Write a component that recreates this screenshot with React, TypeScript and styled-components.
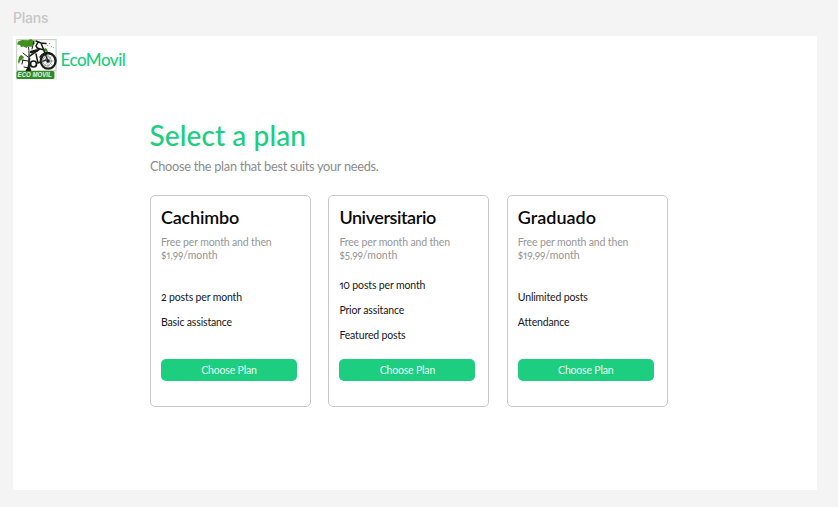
import React from 'react';
import styled, { createGlobalStyle } from 'styled-components';

const green = '#1dce80';

const GlobalStyle = createGlobalStyle`
  *, *::before, *::after { box-sizing: border-box; }
  body {
    margin: 0;
    background: #f4f4f4;
    font-family: Lato, sans-serif;
    font-feature-settings: "onum", "pnum";
    color: #161616;
  }
  h1, h2, p, ul { margin: 0; padding: 0; }
`;

const Canvas = styled.div`
  height: 507px;
  padding: 0 21px 17px 13px;
  display: flex;
  flex-direction: column;
  overflow: hidden;
`;

const FrameLabel = styled.div`
  height: 36px;
  flex: none;
  line-height: 35px;
  font-family: Inter, sans-serif;
  font-size: 14px;
  font-weight: 500;
  letter-spacing: -0.25px;
  color: #c6c6c6;
`;

const Page = styled.main`
  flex: 1;
  background: #fff;
`;

const Header = styled.header`
  display: flex;
  align-items: center;
  gap: 3.5px;
  padding: 3px 3px 0;
  height: 44px;
`;

const LogoImage = styled.svg`
  width: 41px;
  height: 41px;
  flex: none;
`;

const Brand = styled.span`
  font-size: 17px;
  font-weight: 500;
  letter-spacing: -0.5px;
  line-height: 20px;
  color: ${green};
`;

const Content = styled.section`
  padding: 37px 0 0 137px;
`;

const Title = styled.h1`
  margin-left: -0.5px;
  font-size: 28px;
  font-weight: 500;
  letter-spacing: 0.1px;
  line-height: 36px;
  color: ${green};
`;

const Subtitle = styled.p`
  margin-top: 4px;
  font-size: 12.8px;
  letter-spacing: -0.3px;
  line-height: 18px;
  color: #8c8c8c;
`;

const Plans = styled.div`
  display: grid;
  grid-template-columns: repeat(3, 161px);
  column-gap: 17.4px;
  margin-top: 20px;
`;

const Card = styled.article`
  height: 212px;
  padding: 11px 13px 25px 10px;
  border: 1px solid #c9c9c9;
  border-radius: 5px;
  display: flex;
  flex-direction: column;
`;

const PlanName = styled.h2<{ $tracking: number }>`
  font-size: 18px;
  font-weight: 600;
  letter-spacing: ${(p) => p.$tracking}px;
  line-height: 20px;
  color: #0a0a0a;
`;

const Price = styled.p`
  margin-top: 9px;
  font-size: 10.5px;
  letter-spacing: -0.15px;
  line-height: 12.5px;
  color: #969696;
`;

const Amount = styled.span`
  display: block;
  letter-spacing: 0;
`;

const Features = styled.ul`
  flex: 1;
  list-style: none;
  display: flex;
  flex-direction: column;
  justify-content: center;
`;

const Feature = styled.li`
  font-size: 10.5px;
  letter-spacing: -0.15px;
  line-height: 25px;
`;

const ChooseButton = styled.button`
  height: 22px;
  flex: none;
  padding: 0 0 1px;
  border: 0;
  border-radius: 5px;
  background: ${green};
  color: #e6fff3;
  font: inherit;
  font-size: 10.5px;
  letter-spacing: -0.18px;
  line-height: 20px;
`;

const LogoWord = styled.text`
  font: italic 700 6.4px "Liberation Sans", sans-serif;
  fill: #e9f5e5;
`;

function Logo() {
  return (
    <LogoImage viewBox="0 0 41 41" role="img" aria-label="Eco Movil">
      <rect width="41" height="41" fill="#f0f2ee" />
      <rect x="0.8" y="0.8" width="39.2" height="31" fill="#fff" stroke="#a7bd9d" strokeWidth="0.7" />
      <path d="M2 2.500 6 1l6 .3L15 0l3 2 1 3-3 1 .4 2-4-1-2 2-3-1.600L5 8 4 6 1 5.500Z" fill="#43901f" />
      <path d="m3 18 2-2 2 1 1 2-2 1-2 2-1 3-1-2ZM29 9l2 1 1 3-3-.5-1-2ZM12 3l3 3-1 2-3-2Z" fill="#378d1d" />
      <path d="m33 4 .8 1m1.200 3 1-.6M31 6l1 .6m5 1.400.8.8" stroke="#70ad55" />
      <g fill="none" stroke="#151b12" strokeLinecap="round">
        <path d="M12.500 8c1 5 .2 9 .2 14 0 4-.7 7-2.700 9.500h5c-2-3-1.600-7-1.200-12" fill="#151b12" strokeWidth="0.900" />
        <path d="m12 18-5-4m5 8-6-1M14 17l5-6m-1-9-2 8m-9 11-1 4m6 4-4-1" strokeWidth="1" />
        <path d="m20 2 5 2 5 .6M22 3l-2 4 2 3m3-6 7 18M21 9l7 2M14 17l10-7M20 15l2 9 8-3" strokeWidth="1.500" />
        <circle cx="17.500" cy="25" r="3" strokeWidth="1.700" />
        <path d="m15 13 6-1.500" strokeWidth="2.500" />
        <ellipse cx="32.200" cy="22" rx="7.400" ry="7.700" strokeWidth="2.300" />
        <ellipse cx="31" cy="22" rx="4.300" ry="5" stroke="#777" strokeWidth="0.800" />
        <path d="m27 17 10 10m-9 1 8-12M25 22h13m-6-7v14" stroke="#888" strokeWidth="0.600" />
        <path d="M24 18c2-4 7-6 12-3" strokeWidth="1.500" />
      </g>
      <circle cx="32" cy="22" r="1.800" fill="#171b15" />
      <rect x="0.400" y="32" width="38" height="8" rx="1.500" fill="#2f8a23" />
      <LogoWord x="1.600" y="38.400" textLength="34" lengthAdjust="spacingAndGlyphs">ECO MOVIL</LogoWord>
    </LogoImage>
  );
}

interface Plan {
  name: string;
  tracking: number;
  amount: string;
  features: string[];
}

const plans: Plan[] = [
  { name: 'Cachimbo', tracking: -0.2, amount: '$1,99/month', features: ['2 posts per month', 'Basic assistance'] },
  {
    name: 'Universitario',
    tracking: -0.45,
    amount: '$5,99/month',
    features: ['10 posts per month', 'Prior assitance', 'Featured posts'],
  },
  { name: 'Graduado', tracking: 0, amount: '$19,99/month', features: ['Unlimited posts', 'Attendance'] },
];

export default function App() {
  return (
    <Canvas>
      <GlobalStyle />
      <FrameLabel>Plans</FrameLabel>
      <Page>
        <Header>
          <Logo />
          <Brand>EcoMovil</Brand>
        </Header>
        <Content>
          <Title>Select a plan</Title>
          <Subtitle>Choose the plan that best suits your needs.</Subtitle>
          <Plans>
            {plans.map((plan) => (
              <Card key={plan.name}>
                <PlanName $tracking={plan.tracking}>{plan.name}</PlanName>
                <Price>
                  Free per month and then
                  <Amount>{plan.amount}</Amount>
                </Price>
                <Features>
                  {plan.features.map((feature) => (
                    <Feature key={feature}>{feature}</Feature>
                  ))}
                </Features>
                <ChooseButton type="button">Choose Plan</ChooseButton>
              </Card>
            ))}
          </Plans>
        </Content>
      </Page>
    </Canvas>
  );
}
